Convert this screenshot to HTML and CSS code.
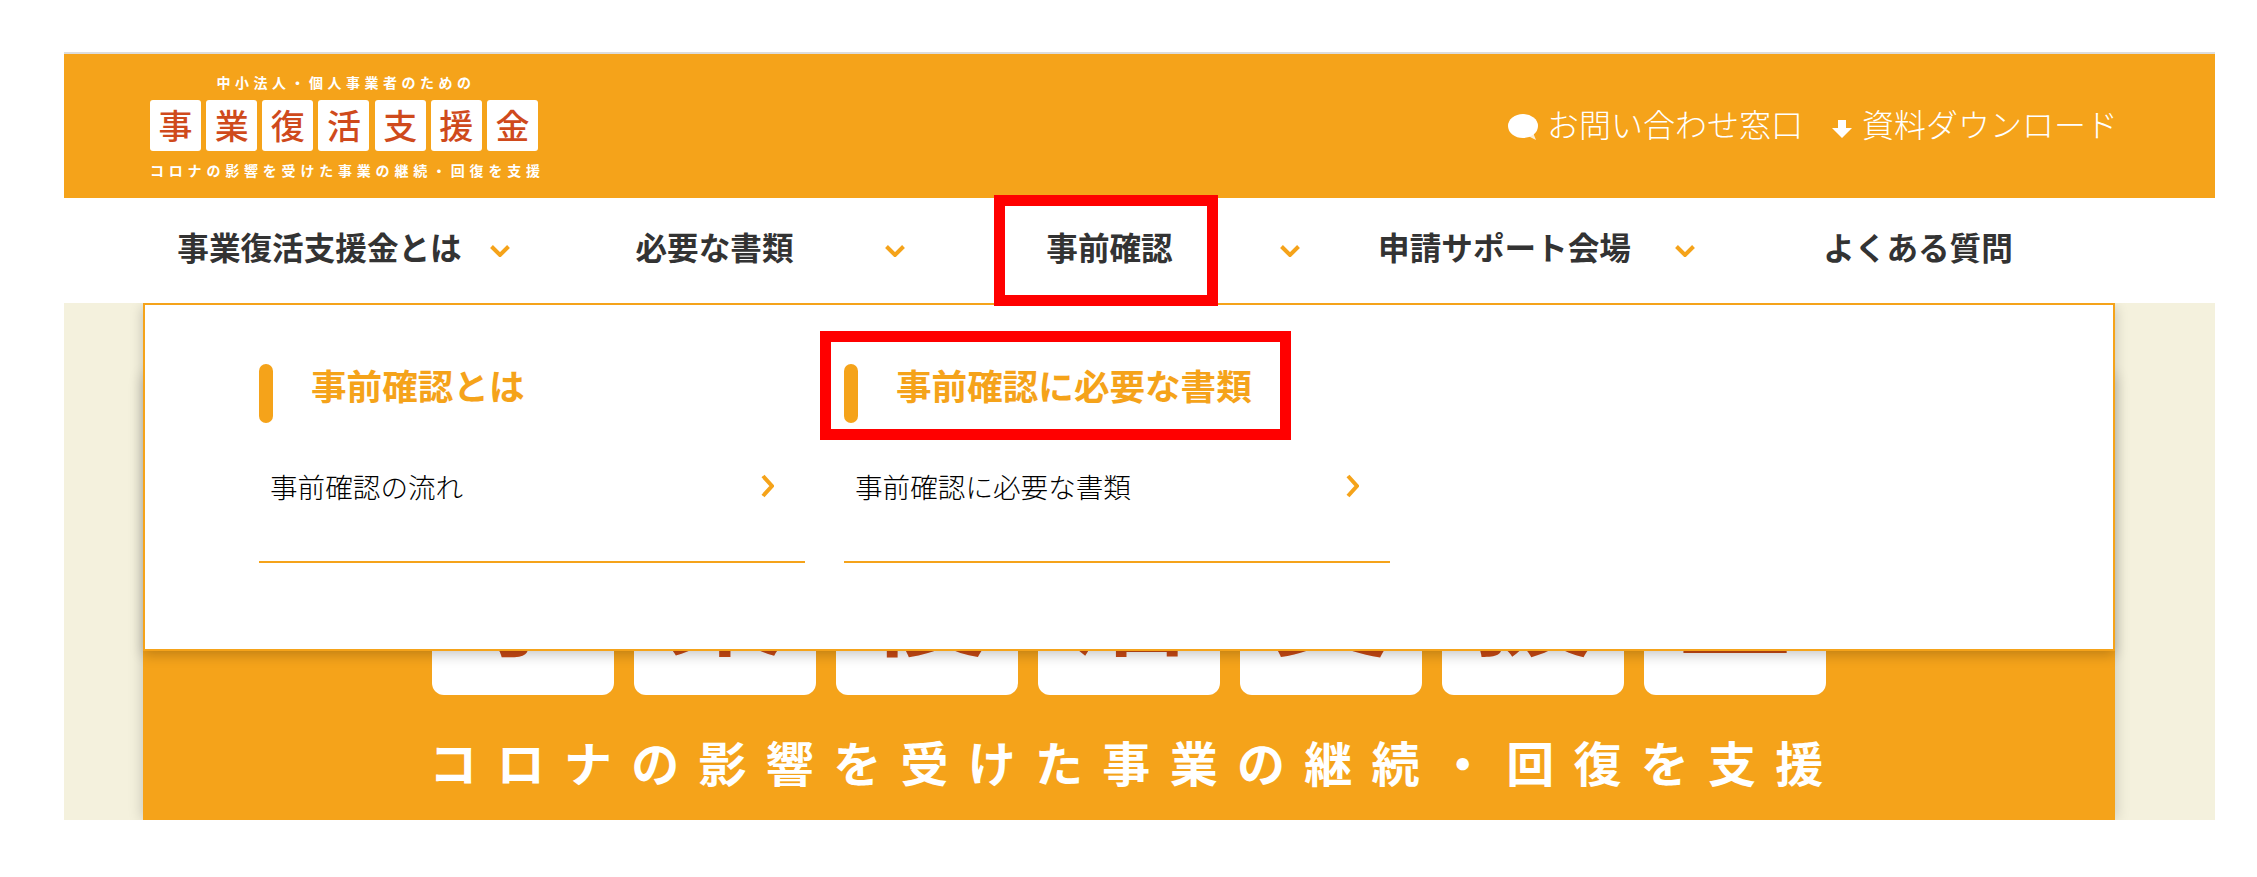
FILE: index.html
```html
<!DOCTYPE html>
<html lang="ja">
<head>
    <meta charset="UTF-8">
    <meta name="viewport" content="width=device-width, initial-scale=1.0">
    <title>事業復活支援金</title>
    <link rel="stylesheet" href="styles.css">
</head>
<body>
    <div class="page">
        <header class="site-header">
            <div class="logo">
                <p class="logo-top">中小法人・個人事業者のための</p>
                <div class="logo-tiles">
                    <span>事</span><span>業</span><span>復</span><span>活</span><span>支</span><span>援</span><span>金</span>
                </div>
                <p class="logo-bottom">コロナの影響を受けた事業の継続・回復を支援</p>
            </div>
            <div class="header-links">
                <a class="header-link" href="#">
                    <svg class="icon-bubble" viewBox="0 0 30 27"><ellipse cx="15" cy="12" rx="15" ry="12" fill="#fff"/><path d="M18 21l10 5-4-10z" fill="#fff" opacity="0.8"/></svg>
                    お問い合わせ窓口
                </a>
                <a class="header-link" href="#">
                    <svg class="icon-down" viewBox="0 0 20 18"><path d="M6 0h8v8h6L10 18 0 8h6z" fill="#fff"/></svg>
                    資料ダウンロード
                </a>
            </div>
        </header>

        <nav class="main-nav">
            <a class="nav-item" href="#"><span>事業復活支援金とは</span><svg class="chev-down" viewBox="0 0 20 12"><path d="M1.500 1.500l8.500 8.500 8.500-8.500" /></svg></a>
            <a class="nav-item" href="#"><span>必要な書類</span><svg class="chev-down" viewBox="0 0 20 12"><path d="M1.500 1.500l8.500 8.500 8.500-8.500" /></svg></a>
            <a class="nav-item nav-marked" href="#"><span>事前確認</span><svg class="chev-down" viewBox="0 0 20 12"><path d="M1.500 1.500l8.500 8.500 8.500-8.500" /></svg></a>
            <a class="nav-item" href="#"><span>申請サポート会場</span><svg class="chev-down" viewBox="0 0 20 12"><path d="M1.500 1.500l8.500 8.500 8.500-8.500" /></svg></a>
            <a class="nav-item nav-last" href="#"><span>よくある質問</span></a>
        </nav>

        <main class="content">
            <section class="hero">
                <div class="hero-tiles">
                    <span>事</span><span>業</span><span>復</span><span>活</span><span>支</span><span>援</span><span>金</span>
                </div>
                <p class="hero-text">コロナの影響を受けた事業の継続・回復を支援</p>
            </section>

            <div class="dropdown">
                <div class="menu-col">
                    <h3 class="menu-title">事前確認とは</h3>
                    <a class="menu-link" href="#">事前確認の流れ<svg class="chev-right" viewBox="0 0 13 24"><path d="M2 2l9 10-9 10" /></svg></a>
                </div>
                <div class="menu-col">
                    <h3 class="menu-title title-marked">事前確認に必要な書類</h3>
                    <a class="menu-link" href="#">事前確認に必要な書類<svg class="chev-right" viewBox="0 0 13 24"><path d="M2 2l9 10-9 10" /></svg></a>
                </div>
            </div>
        </main>
    </div>
</body>
</html>
```

FILE: styles.css
```css
*, *::before, *::after {
    margin: 0;
    padding: 0;
    box-sizing: border-box;
}

body {
    background: #fff;
    font-family: "Noto Sans CJK JP", "Noto Sans", sans-serif;
    color: #333;
}

a {
    color: inherit;
    text-decoration: none;
}

.page {
    margin: 52px 42px 57px 64px;
    border-top: 2px solid #ddd;
}

/* header */
.site-header {
    display: flex;
    justify-content: space-between;
    align-items: center;
    height: 144px;
    padding: 0 97px 0 86px;
    background: #f5a31a;
    color: #fff;
}

.logo {
    width: 388px;
    text-align: center;
}

.logo-top {
    font-size: 14px;
    line-height: 20px;
    font-weight: 700;
    letter-spacing: 4.5px;
    margin-bottom: 8px;
    padding-left: 4px;
}

.logo-tiles {
    display: flex;
    justify-content: space-between;
}

.logo-tiles span {
    width: 51px;
    height: 51px;
    border-radius: 3px;
    background: #fff;
    color: #cf4a1c;
    font-size: 34px;
    font-weight: 500;
    line-height: 49px;
}

.logo-bottom {
    font-size: 14px;
    line-height: 20px;
    font-weight: 700;
    letter-spacing: 4.8px;
    white-space: nowrap;
    margin-top: 9px;
}

.header-links {
    display: flex;
    gap: 29px;
    margin-top: -6px;
}

.header-link {
    display: flex;
    align-items: center;
    gap: 9px;
    font-size: 32px;
    font-weight: 300;
    line-height: 40px;
}

.icon-bubble {
    width: 30px;
    height: 27px;
    margin: 8px 0 0 1px;
}

.icon-down {
    width: 20px;
    height: 18px;
    margin: 12px 1px 0 0;
}

/* nav */
.main-nav {
    position: relative;
    z-index: 2;
    display: grid;
    grid-template-columns: repeat(4, 395px) 1fr;
    height: 105px;
    padding: 0 80px 0 57px;
    background: #fff;
}

.nav-item {
    position: relative;
    display: flex;
    align-items: center;
    padding: 0 6px 0 28px;
    font-size: 31.6px;
    font-weight: 700;
    white-space: nowrap;
}

.nav-item span {
    flex: 1;
    padding-bottom: 10px;
    text-align: center;
}

.nav-last {
    padding: 0;
}

.chev-down {
    width: 20px;
    height: 12px;
    fill: none;
    stroke: #f5a31a;
    stroke-width: 4;
}

.nav-marked::after {
    content: "";
    position: absolute;
    left: 83px;
    top: -3px;
    width: 224px;
    height: 111px;
    border: 11px solid #f00;
}

/* content */
.content {
    position: relative;
    overflow: hidden;
    padding: 72px 100px 0 79px;
    height: 517px;
    background: #f4f1dd;
}

.hero {
    height: 445px;
    padding-top: 138px;
    background: #f5a31a;
    box-shadow: 0 0 14px rgba(0, 0, 0, 0.2);
}

.hero-tiles {
    display: flex;
    justify-content: center;
    gap: 20px;
}

.hero-tiles span {
    width: 182px;
    height: 182px;
    border-radius: 12px;
    background: #fff;
    color: #c94a14;
    font-size: 121px;
    font-weight: 500;
    line-height: 162px;
    text-align: center;
}

.hero-text {
    margin-top: 31px;
    padding-left: 14px;
    text-align: center;
    color: #fff;
    font-size: 48px;
    font-weight: 700;
    line-height: 70px;
    letter-spacing: 19.3px;
    white-space: nowrap;
}

/* dropdown */
.dropdown {
    position: absolute;
    top: 0;
    left: 79px;
    display: flex;
    gap: 39px;
    width: 1972px;
    height: 348px;
    padding: 59px 0 0 114px;
    background: #fff;
    border: 2px solid #f5a31a;
    box-shadow: 0 4px 12px rgba(0, 0, 0, 0.22);
}

.menu-col {
    width: 546px;
}

.menu-title {
    position: relative;
    height: 59px;
    padding-left: 52px;
    color: #f5a31a;
    font-size: 35.6px;
    font-weight: 700;
    line-height: 42px;
}

.menu-title::before {
    content: "";
    position: absolute;
    left: 0;
    top: 0;
    width: 14px;
    height: 59px;
    border-radius: 7px;
    background: #f5a31a;
}

.title-marked::after {
    content: "";
    position: absolute;
    left: -24px;
    top: -33px;
    width: 471px;
    height: 109px;
    border: 11px solid #f00;
}

.menu-link {
    display: flex;
    justify-content: space-between;
    align-items: center;
    height: 140px;
    padding: 0 31px 13px 11px;
    border-bottom: 2px solid #f5a31a;
    color: #000;
    font-size: 27.6px;
    font-weight: 300;
}

.chev-right {
    width: 13px;
    height: 24px;
    fill: none;
    stroke: #f5a31a;
    stroke-width: 4;
}
```
